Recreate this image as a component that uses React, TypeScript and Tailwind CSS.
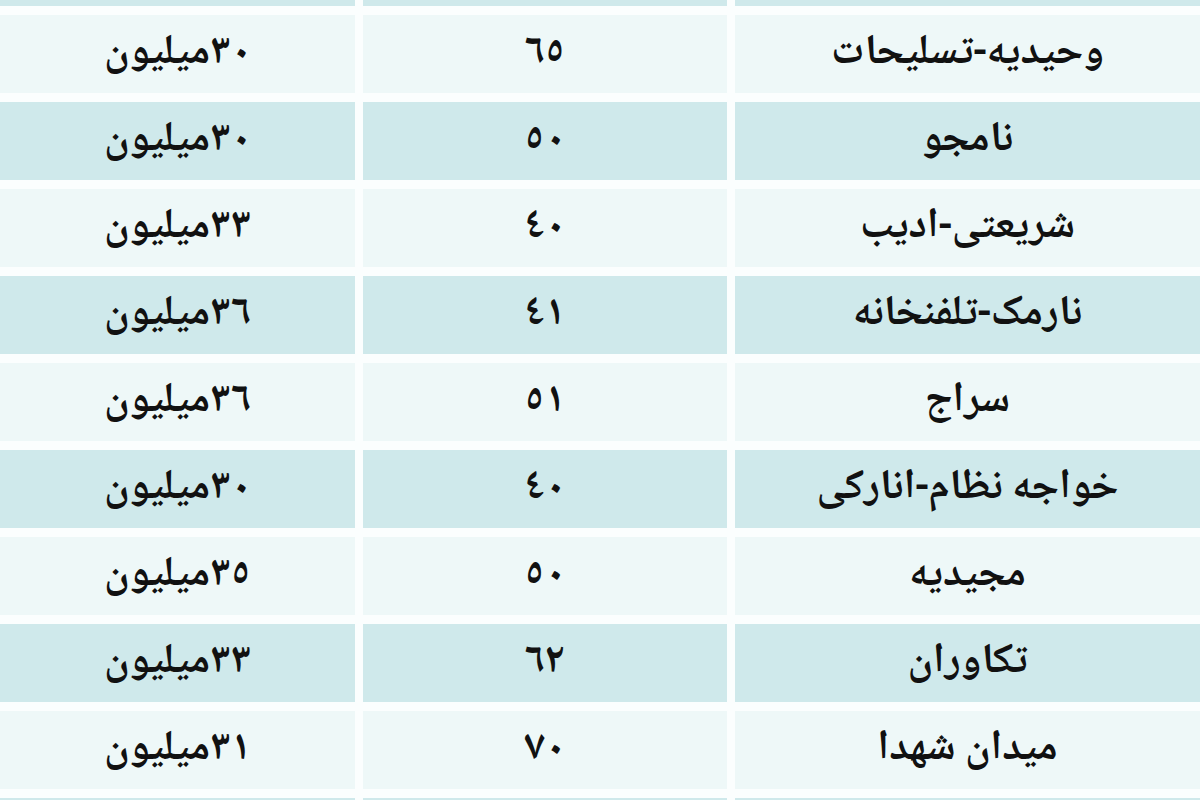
import React from "react";

const rows = [
  { area: "وحیدیه-تسلیحات", age: "٦٥", price: "٣٠میلیون" },
  { area: "نامجو", age: "٥٠", price: "٣٠میلیون" },
  { area: "شریعتی-ادیب", age: "٤٠", price: "٣٣میلیون" },
  { area: "نارمک-تلفنخانه", age: "٤١", price: "٣٦میلیون" },
  { area: "سراج", age: "٥١", price: "٣٦میلیون" },
  { area: "خواجه نظام-انارکی", age: "٤٠", price: "٣٠میلیون" },
  { area: "مجیدیه", age: "٥٠", price: "٣٥میلیون" },
  { area: "تکاوران", age: "٦٢", price: "٣٣میلیون" },
  { area: "میدان شهدا", age: "٧٠", price: "٣١میلیون" },
];

const Cell = ({ children, blue }: { children?: React.ReactNode; blue: boolean }) => (
  <div
    className={`flex items-center justify-center ${blue ? "bg-[#cfe9eb]" : "bg-[#eef8f8]"}`}
  >
    {children}
  </div>
);

const App = () => {
  return (
    <div
      dir="rtl"
      className="flex h-[800px] w-[1200px] flex-col gap-[9px] overflow-hidden bg-[#fbfefe] text-[42px] font-bold leading-none text-[#111]"
      style={{ fontFamily: '"Noto Naskh Arabic", "Noto Sans Arabic", "DejaVu Sans", serif' }}
    >
      {/* partial row at the top */}
      <div className="grid h-[6px] shrink-0 grid-cols-[465px_364px_355px] gap-[8px]">
        <Cell blue />
        <Cell blue />
        <Cell blue />
      </div>

      {rows.map((r, i) => {
        const blue = i % 2 === 1;
        return (
          <div key={i} className="grid h-[78px] shrink-0 grid-cols-[465px_364px_355px] gap-[8px]">
            <Cell blue={blue}>{r.area}</Cell>
            <Cell blue={blue}>{r.age}</Cell>
            <Cell blue={blue}>{r.price}</Cell>
          </div>
        );
      })}

      {/* partial row at the bottom */}
      <div className="grid h-[20px] shrink-0 grid-cols-[465px_364px_355px] gap-[8px]">
        <Cell blue />
        <Cell blue />
        <Cell blue />
      </div>
    </div>
  );
};

export default App;
